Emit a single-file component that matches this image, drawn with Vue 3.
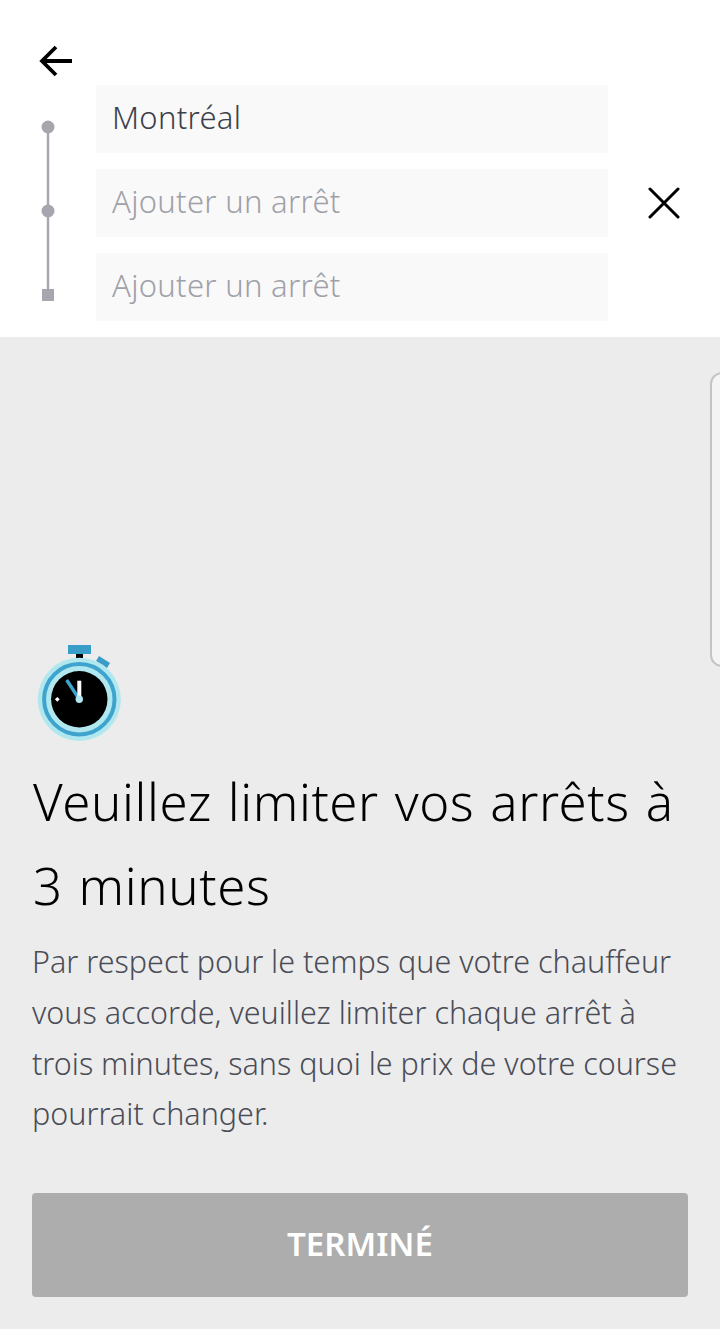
<script setup>
const stops = [
  { text: 'Montréal', filled: true },
  { text: 'Ajouter un arrêt', filled: false },
  { text: 'Ajouter un arrêt', filled: false }
]
</script>

<template>
  <div class="page">
    <header class="top">
      <button class="back" aria-label="Retour">
        <svg width="34" height="32" viewBox="0 0 34 32">
          <path d="M33 16H3M17 2 3 16l14 14" fill="none" stroke="#000" stroke-width="3.8" />
        </svg>
      </button>
      <div class="route">
        <svg class="rail" width="16" height="192" viewBox="0 0 16 192">
          <path d="M8 8V176" stroke="#a6a6ae" stroke-width="2.4" />
          <circle cx="8" cy="8" r="6.5" fill="#a6a6ae" />
          <circle cx="8" cy="92" r="6.5" fill="#a6a6ae" />
          <rect x="2" y="170" width="12" height="12" fill="#a6a6ae" />
        </svg>
        <div class="fields">
          <div v-for="(s, i) in stops" :key="i" class="field" :class="{ filled: s.filled }">{{ s.text }}</div>
        </div>
        <button class="close" aria-label="Fermer">
          <svg width="32" height="32" viewBox="0 0 32 32">
            <path d="M2 2 30 30M30 2 2 30" fill="none" stroke="#000" stroke-width="3" stroke-linecap="round" />
          </svg>
        </button>
      </div>
    </header>
    <main class="body">
      <div class="edge"></div>
      <svg class="watch" width="88" height="100" viewBox="0 0 88 100">
        <rect x="31" y="3" width="23" height="9" fill="#3a9cc9" />
        <rect x="39" y="12" width="7" height="5" fill="#000" />
        <path d="m62 14 11 7-3 5-11-7z" fill="#3a9cc9" />
        <circle cx="42.3" cy="57.3" r="41.6" fill="#b1e8ef" />
        <circle cx="42.3" cy="57.3" r="35.2" fill="none" stroke="#3fa4cd" stroke-width="4" />
        <circle cx="42.3" cy="57.3" r="28.2" fill="#000" />
        <path d="M29.7 38 42.3 57.3" stroke="#3fa4cd" stroke-width="3.4" />
        <path d="M42.3 38.7V57.3" stroke="#fff" stroke-width="4" />
        <circle cx="42.3" cy="57.3" r="3.7" fill="#b1e8ef" />
        <path d="m20.3 54.9 2.4 2.4-2.4 2.4-2.4-2.4z" fill="#fff" />
      </svg>
      <h1 class="title">Veuillez limiter vos arrêts à<br />3 minutes</h1>
      <p class="text">Par respect pour le temps que votre chauffeur vous accorde, veuillez limiter chaque arrêt à trois minutes, sans quoi le prix de votre course pourrait changer.</p>
      <button class="done">TERMINÉ</button>
    </main>
  </div>
</template>

<style>
html, body { margin: 0; background: #ececed; }
</style>

<style scoped>
.page {
  width: 720px;
  height: 1329px;
  display: flex;
  flex-direction: column;
  overflow: hidden;
  font-family: "Noto Sans", "Open Sans", sans-serif;
}
button {
  border: 0;
  padding: 0;
  background: none;
  font-family: inherit;
  display: block;
}
.top {
  background: #fff;
  height: 337px;
  box-sizing: border-box;
  padding: 45px 0 0 39px;
  flex: none;
}
.back { width: 34px; height: 32px; }
.back svg, .close svg { display: block; }
.route {
  display: flex;
  margin-top: 8px;
  margin-left: 1px;
}
.rail {
  margin-top: 34px;
  flex: none;
}
.fields {
  margin-left: 40px;
  width: 512px;
  display: flex;
  flex-direction: column;
  gap: 16px;
}
.field {
  height: 68px;
  line-height: 64px;
  background: #f9f9f9;
  padding-left: 16px;
  font-size: 31px;
  letter-spacing: 0.3px;
  font-weight: 300;
  color: #a0a0a8;
}
.field.filled { color: #3c3f49; }
.close {
  width: 32px;
  height: 32px;
  margin: 102px 0 0 40px;
}
.body {
  position: relative;
  flex: 1;
  background: #ececed;
  box-sizing: border-box;
  padding: 305px 32px 0;
}
.edge {
  position: absolute;
  left: 710px;
  top: 35px;
  width: 30px;
  height: 295px;
  box-sizing: border-box;
  border: 2px solid #c4c4c6;
  border-radius: 12px;
  background: #f4f4f5;
}
.watch {
  display: block;
  margin-left: 5px;
}
.title {
  margin: 17px 0 0 1px;
  font-weight: 300;
  font-size: 51px;
  line-height: 84px;
  letter-spacing: 0.6px;
  word-spacing: 2px;
  color: #000;
  white-space: nowrap;
}
.text {
  margin: 9px 0 0;
  font-size: 30.5px;
  font-weight: 300;
  line-height: 50.75px;
  color: #4a4c56;
  width: 656px;
}
.done {
  position: absolute;
  left: 32px;
  top: 856px;
  width: 656px;
  height: 104px;
  padding-bottom: 4px;
  border-radius: 4px;
  background: #adadad;
  color: #fff;
  font-size: 33px;
  font-weight: 600;
}
</style>
